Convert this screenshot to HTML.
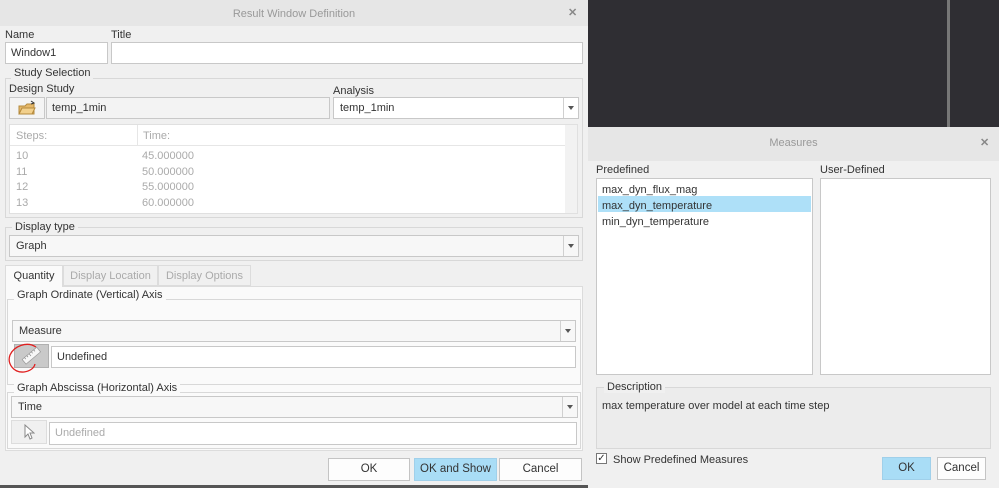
<!DOCTYPE html>
<html><head><meta charset="utf-8"><style>
*{box-sizing:border-box;margin:0;padding:0}
body{width:999px;height:488px;position:relative;overflow:hidden;background:#f0f0f0;font-family:"Liberation Sans",sans-serif;font-size:11px;color:#333}
.a{position:absolute}
.in{position:absolute;background:#fff;border:1px solid #c8c8c8;padding-left:5px;line-height:20px}
.ro{background:#f3f3f3}
.grp{position:absolute;border:1px solid #d8d8d8}
.lg{position:absolute;background:#f0f0f0;padding:0 3px;line-height:12px}
.dd{position:absolute;background:#f7f7f7;border:1px solid #c8c8c8;padding-left:6px;line-height:21px}
.dd:after{content:"";position:absolute;right:0;top:0;width:14px;height:100%;border-left:1px solid #d0d0d0}
.dd:before{content:"";position:absolute;right:4px;top:8px;border:3px solid transparent;border-top:4px solid #555;z-index:1}
.btn{position:absolute;background:#fdfdfd;border:1px solid #c4c4c4;text-align:center;line-height:21px;font-size:11.5px}
.blue{background:#a9ddf6;border-color:#a0d0ea}
.g{color:#aaa}
</style></head><body>
<div class="a" style="left:0;top:0;width:588px;height:26px;background:#e6e6e6"></div>
<div class="a g" style="left:0;width:588px;top:8px;text-align:center;font-size:11px;color:#999">Result Window Definition</div>
<div class="a" style="left:568px;top:6px;color:#888;font-weight:bold;font-size:11px">✕</div>
<div class="a" style="left:5px;top:29px">Name</div>
<div class="a" style="left:111px;top:29px">Title</div>
<div class="in" style="left:5px;top:42px;width:103px;height:22px">Window1</div>
<div class="in" style="left:111px;top:42px;width:472px;height:22px"></div>

<div class="grp" style="left:5px;top:78px;width:578px;height:140px"></div>
<div class="lg" style="left:11px;top:67px">Study Selection</div>
<div class="a" style="left:9px;top:83px">Design Study</div>
<div class="a" style="left:333px;top:85px">Analysis</div>
<div class="a" style="left:9px;top:97px;width:36px;height:22px;background:#f4f4f4;border:1px solid #c8c8c8"></div>
<svg class="a" style="left:17px;top:100px" width="20" height="17" viewBox="0 0 20 17"><path d="M2 6h6l2-2h7v10H2z" fill="#e5b86a" stroke="#b58a3c"/><path d="M2 14l3-6h13l-3 6z" fill="#f2d08c" stroke="#b58a3c"/><path d="M14 1l3 2-3 1" fill="none" stroke="#333"/></svg>
<div class="in ro" style="left:46px;top:97px;width:284px;height:22px">temp_1min</div>
<div class="dd" style="left:333px;top:97px;width:246px;height:22px;background:#fff">temp_1min</div>
<div class="a" style="left:9px;top:124px;width:569px;height:90px;background:#fff;border:1px solid #e0e0e0"></div>
<div class="a" style="left:10px;top:125px;width:555px;height:21px;border-bottom:1px solid #e6e6e6;background:#fff"></div>
<div class="a" style="left:137px;top:125px;width:1px;height:21px;background:#e6e6e6"></div>
<div class="a" style="left:565px;top:125px;width:12px;height:88px;background:#f2f2f2"></div>
<div class="a g" style="left:16px;top:130px">Steps:</div><div class="a g" style="left:143px;top:130px">Time:</div>
<div class="a g" style="left:16px;top:149px;line-height:15.7px">10<br>11<br>12<br>13</div>
<div class="a g" style="left:142px;top:149px;line-height:15.7px">45.000000<br>50.000000<br>55.000000<br>60.000000</div>

<div class="grp" style="left:5px;top:227px;width:578px;height:34px"></div>
<div class="lg" style="left:12px;top:221px">Display type</div>
<div class="dd" style="left:9px;top:235px;width:570px;height:22px">Graph</div>

<div class="a" style="left:5px;top:286px;width:578px;height:165px;background:#fafafa;border:1px solid #dcdcdc"></div>
<div class="a" style="left:5px;top:265px;width:58px;height:22px;background:#fafafa;border:1px solid #dcdcdc;border-bottom:none;text-align:center;line-height:21px">Quantity</div>
<div class="a g" style="left:63px;top:265px;width:95px;height:21px;border:1px solid #dcdcdc;text-align:center;line-height:21px">Display Location</div>
<div class="a g" style="left:158px;top:265px;width:93px;height:21px;border:1px solid #dcdcdc;text-align:center;line-height:21px">Display Options</div>

<div class="grp" style="left:7px;top:299px;width:574px;height:86px"></div>
<div class="lg" style="left:14px;top:289px;background:#fafafa">Graph Ordinate (Vertical) Axis</div>
<div class="dd" style="left:12px;top:320px;width:564px;height:22px">Measure</div>
<div class="a" style="left:14px;top:344px;width:35px;height:24px;background:#c9c9c9;border:1px solid #b0b0b0"></div>
<svg class="a" style="left:7px;top:340px" width="44" height="40" viewBox="0 0 44 40"><g transform="rotate(-40 24 16)"><rect x="15" y="13" width="19" height="6" fill="#f6f6f6" stroke="#999" stroke-width=".7"/><path d="M18 13v2M21 13v2M24 13v3M27 13v2M30 13v2" stroke="#888" stroke-width=".7"/></g><path d="M29 7C20 1 7 6 3 15c-3 8 3 18 14 17 6-1 10-4 11-8" fill="none" stroke="#e02020" stroke-width="1.3"/></svg>
<div class="in" style="left:51px;top:346px;width:525px;height:22px">Undefined</div>

<div class="grp" style="left:7px;top:392px;width:574px;height:57px"></div>
<div class="lg" style="left:14px;top:382px;background:#fafafa">Graph Abscissa (Horizontal) Axis</div>
<div class="dd" style="left:11px;top:396px;width:567px;height:22px">Time</div>
<div class="a" style="left:11px;top:420px;width:36px;height:24px;background:#f0f0f0;border:1px solid #ddd"></div>
<svg class="a" style="left:23px;top:424px" width="12" height="16" viewBox="0 0 12 16"><path d="M2 1v12l3-3 2 5 2-1-2-5h4z" fill="#fff" stroke="#888"/></svg>
<div class="in g" style="left:49px;top:422px;width:528px;height:23px">Undefined</div>

<div class="btn" style="left:328px;top:458px;width:82px;height:23px">OK</div>
<div class="btn blue" style="left:414px;top:458px;width:83px;height:23px">OK and Show</div>
<div class="btn" style="left:499px;top:458px;width:83px;height:23px">Cancel</div>
<div class="a" style="left:0;top:485px;width:588px;height:3px;background:#555"></div>

<div class="a" style="left:588px;top:0;width:411px;height:127px;background:#2f2e33"></div>
<div class="a" style="left:947px;top:0;width:3px;height:127px;background:#777"></div>
<div class="a" style="left:588px;top:127px;width:411px;height:361px;background:#f0f0f0"></div>
<div class="a" style="left:588px;top:127px;width:411px;height:34px;background:#e6e6e6"></div>
<div class="a" style="left:588px;width:411px;top:137px;text-align:center;color:#999">Measures</div>
<div class="a" style="left:980px;top:136px;color:#888;font-weight:bold">✕</div>
<div class="a" style="left:596px;top:164px">Predefined</div>
<div class="a" style="left:820px;top:164px">User-Defined</div>
<div class="a" style="left:596px;top:178px;width:217px;height:197px;background:#fff;border:1px solid #c8c8c8"></div>
<div class="a" style="left:598px;top:196px;width:213px;height:16px;background:#aee0f8"></div>
<div class="a" style="left:602px;top:182px;line-height:16px;font-size:11px">max_dyn_flux_mag<br>max_dyn_temperature<br>min_dyn_temperature</div>
<div class="a" style="left:820px;top:178px;width:171px;height:197px;background:#fff;border:1px solid #c8c8c8"></div>
<div class="grp" style="left:596px;top:387px;width:395px;height:62px;background:#ececec"></div>
<div class="lg" style="left:604px;top:381px">Description</div>
<div class="a" style="left:602px;top:400px">max temperature over model at each time step</div>
<div class="a" style="left:596px;top:453px;width:11px;height:11px;border:1px solid #777;background:#fff;font-size:10px;line-height:9px;text-align:center">✓</div>
<div class="a" style="left:613px;top:454px">Show Predefined Measures</div>
<div class="btn blue" style="left:882px;top:457px;width:49px;height:23px">OK</div>
<div class="btn" style="left:937px;top:457px;width:49px;height:23px">Cancel</div>
</body></html>
